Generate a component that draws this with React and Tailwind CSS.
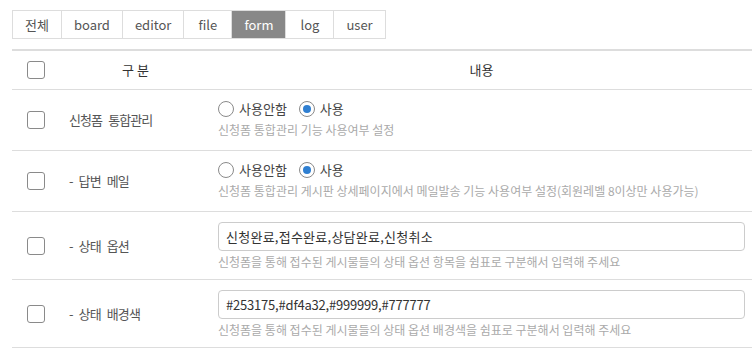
import { useState } from 'react'

const tabs = ['전체', 'board', 'editor', 'file', 'form', 'log', 'user']

function Checkbox() {
  return <span className="block w-[18px] h-[18px] rounded-[3px] border border-[#8a8a8a] bg-white" />
}

function Radio({ checked, label }) {
  return (
    <label className="flex items-center gap-[5px]">
      <span className="flex items-center justify-center w-[16px] h-[16px] rounded-full border border-[#8a8a8a] bg-white">
        {checked && <span className="block w-[8px] h-[8px] rounded-full bg-[#2f7fd1]" />}
      </span>
      <span className="text-[13px] text-[#444]">{label}</span>
    </label>
  )
}

function Row({ label, children, help, tall }) {
  return (
    <div className="flex items-center border-b border-[#ddd]">
      <div className="w-[48px] flex justify-center">
        <Checkbox />
      </div>
      <div className="w-[151px] pl-[9px] text-[13px] tracking-[-0.9px] [word-spacing:4px] text-[#555]">{label}</div>
      <div className={'flex-1 pl-[7px] pr-[7px] ' + (tall ? 'pt-[10px] pb-[10px]' : 'pt-[9px] pb-[13px]')}>
        {children}
        <p className="mt-[4px] leading-[14px] text-[12px] text-[#aaa]">{help}</p>
      </div>
    </div>
  )
}

export default function App() {
  const [active] = useState('form')

  return (
    <div className="w-[752px] h-[355px] overflow-hidden bg-white pl-3 pt-[10px] font-['Noto_Sans_CJK_KR',sans-serif] leading-[20px]">
      <div className="flex h-[29px] border-l border-[#ddd]">
        {tabs.map(t => (
          <div
            key={t}
            className={
              'flex items-center justify-center min-w-[48px] px-3 border-y border-r border-[#ddd] text-[13px] ' +
              (t === active ? 'bg-[#888] text-white' : 'bg-white text-[#555]')
            }
          >
            {t}
          </div>
        ))}
      </div>

      <div className="mt-[10px] border-t-2 border-[#ddd]">
        <div className="flex items-center h-[39px] border-b border-[#ddd] text-[13px] text-[#333]">
          <div className="w-[48px] flex justify-center">
            <Checkbox />
          </div>
          <div className="w-[151px] text-center">구 분</div>
          <div className="flex-1 text-center">내용</div>
        </div>

        <Row label="신청폼 통합관리" help="신청폼 통합관리 기능 사용여부 설정">
          <div className="flex items-center gap-[12px] h-[20px]">
            <Radio label="사용안함" />
            <Radio checked label="사용" />
          </div>
        </Row>

        <Row label="- 답변 메일" help="신청폼 통합관리 게시판 상세페이지에서 메일발송 기능 사용여부 설정(회원레벨 8이상만 사용가능)">
          <div className="flex items-center gap-[12px] h-[20px]">
            <Radio label="사용안함" />
            <Radio checked label="사용" />
          </div>
        </Row>

        <Row tall label="- 상태 옵션" help="신청폼을 통해 접수된 게시물들의 상태 옵션 항목을 쉼표로 구분해서 입력해 주세요">
          <input
            readOnly
            value="신청완료,접수완료,상담완료,신청취소"
            className="block w-full h-[29px] px-[7px] rounded-[4px] border border-[#ccc] text-[13px] tracking-[0.25px] text-[#333] outline-none"
          />
        </Row>

        <Row tall label="- 상태 배경색" help="신청폼을 통해 접수된 게시물들의 상태 옵션 배경색을 쉼표로 구분해서 입력해 주세요">
          <input
            readOnly
            value="#253175,#df4a32,#999999,#777777"
            className="block w-full h-[29px] px-[7px] rounded-[4px] border border-[#ccc] text-[13px] tracking-[-0.2px] text-[#333] outline-none"
          />
        </Row>
      </div>
    </div>
  )
}
